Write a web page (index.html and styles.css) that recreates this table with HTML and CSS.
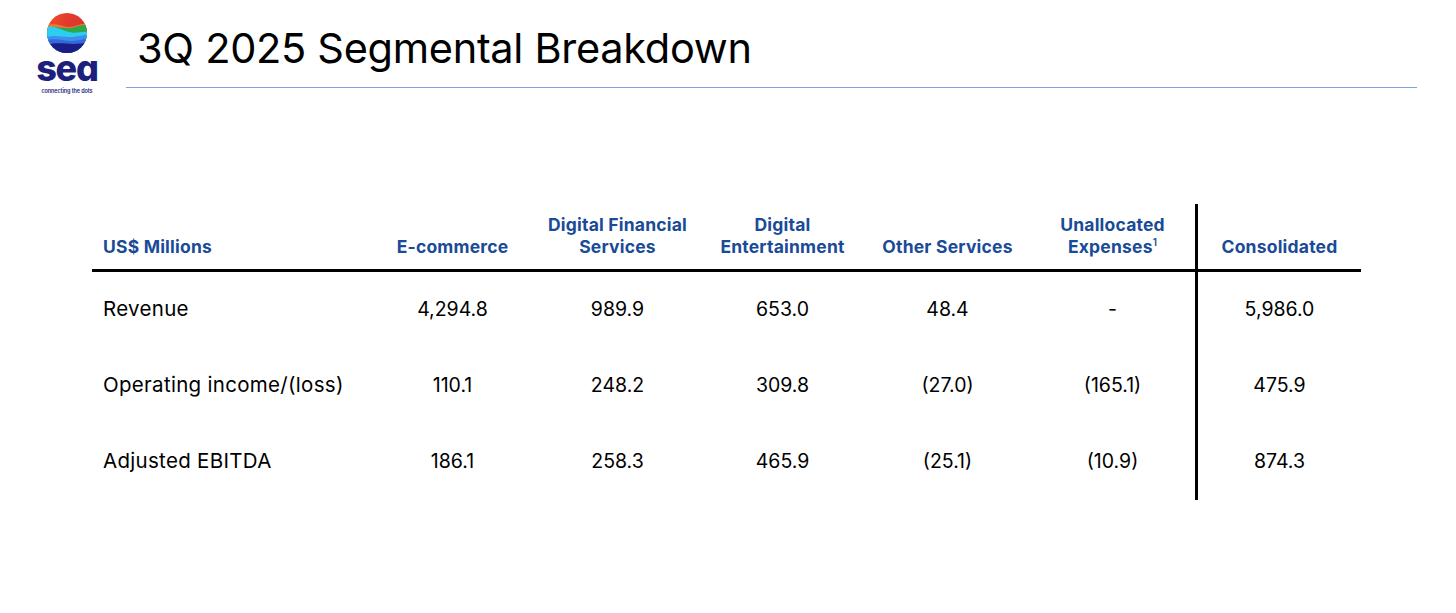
FILE: index.html
```html
<!DOCTYPE html>
<html lang="en">
<head>
<meta charset="utf-8">
<title>3Q 2025 Segmental Breakdown</title>
<link rel="stylesheet" href="styles.css">
</head>
<body>
<div class="slide">
  <header class="top">
    <div class="logo">
      <svg class="logo-mark" viewBox="0 0 40 40" width="40" height="40" aria-hidden="true">
        <defs>
          <clipPath id="c"><circle cx="20" cy="20" r="20"/></clipPath>
          <linearGradient id="rg" x1="0" y1="0" x2="1" y2="0.4">
            <stop offset="0" stop-color="#f0522a"/>
            <stop offset="0.5" stop-color="#e33a2c"/>
            <stop offset="1" stop-color="#d9342e"/>
          </linearGradient>
        </defs>
        <g clip-path="url(#c)">
          <rect x="0" y="0" width="40" height="40" fill="url(#rg)"/>
          <path d="M0 12 C8 10 14 13 20 14 C27 15 33 10 40 11 L40 40 L0 40 Z" fill="#f47a32"/>
          <path d="M0 15 C8 12 16 16 24 15 C30 14 35 11 40 12 L40 40 L0 40 Z" fill="#2ea84a"/>
          <path d="M0 14 C7 12 14 17 22 19 C29 21 34 18 40 19 L40 40 L0 40 Z" fill="#2ccdf0"/>
          <path d="M0 24 C8 22 14 24 22 24 C30 24 35 22 40 22 L40 40 L0 40 Z" fill="#3d8fea"/>
          <path d="M0 27 C8 25 16 28 24 28 C31 28 36 26 40 26 L40 40 L0 40 Z" fill="#3566dc"/>
          <path d="M0 32 C10 29 18 31 26 31 C32 31 36 30 40 30 L40 40 L0 40 Z" fill="#1b1d86"/>
        </g>
      </svg>
      <div class="logo-word">sea</div>
      <div class="logo-tag">connecting the dots</div>
    </div>
    <div class="title-wrap">
      <h1 class="title">3Q 2025 Segmental Breakdown</h1>
    </div>
  </header>

  <main class="content">
    <div class="table">
      <div class="cell head first"><span>US$ Millions</span></div>
      <div class="cell head"><span>E-commerce</span></div>
      <div class="cell head"><span>Digital Financial<br>Services</span></div>
      <div class="cell head"><span>Digital<br>Entertainment</span></div>
      <div class="cell head"><span>Other Services</span></div>
      <div class="cell head"><span>Unallocated<br>Expenses<sup>1</sup></span></div>
      <div class="cell head consol"><span>Consolidated</span></div>

      <div class="cell label">Revenue</div>
      <div class="cell num">4,294.8</div>
      <div class="cell num">989.9</div>
      <div class="cell num">653.0</div>
      <div class="cell num">48.4</div>
      <div class="cell num">-</div>
      <div class="cell num consol">5,986.0</div>

      <div class="cell label">Operating income/(loss)</div>
      <div class="cell num">110.1</div>
      <div class="cell num">248.2</div>
      <div class="cell num">309.8</div>
      <div class="cell num">(27.0)</div>
      <div class="cell num">(165.1)</div>
      <div class="cell num consol">475.9</div>

      <div class="cell label">Adjusted EBITDA</div>
      <div class="cell num">186.1</div>
      <div class="cell num">258.3</div>
      <div class="cell num">465.9</div>
      <div class="cell num">(25.1)</div>
      <div class="cell num">(10.9)</div>
      <div class="cell num consol">874.3</div>
    </div>
  </main>
</div>
</body>
</html>
```

FILE: styles.css
```css
* { box-sizing: border-box; }
html, body {
  margin: 0;
  padding: 0;
  background: #ffffff;
}
body {
  font-family: Inter, "Noto Sans", "Liberation Sans", sans-serif;
  color: #000;
}
.slide {
  width: 1456px;
  height: 613px;
  overflow: hidden;
}
.top {
  display: flex;
  align-items: flex-start;
  height: 97px;
  padding-top: 13px;
}
.logo {
  width: 126px;
  display: flex;
  flex-direction: column;
  align-items: center;
  padding-left: 8px;
}
.logo-mark {
  display: block;
}
.logo-word {
  font-family: Inter, sans-serif;
  font-feature-settings: "cv11" 1;
  font-weight: 800;
  font-size: 36px;
  line-height: 36px;
  letter-spacing: -1.2px;
  color: #1c1f7c;
  margin-top: -3px;
}
.logo-tag {
  font-family: Inter, sans-serif;
  font-weight: 600;
  font-size: 5.5px;
  line-height: 7px;
  letter-spacing: -0.1px;
  color: #1c1f7c;
  margin-top: 2px;
}
.title-wrap {
  flex: 1;
  margin-right: 39px;
  border-bottom: 1px solid #7fa3dc;
  height: 75px;
}
.title {
  margin: 0;
  padding-left: 11px;
  padding-top: 11px;
  font-weight: 400;
  font-size: 41.5px;
  line-height: 48px;
  letter-spacing: -0.3px;
  color: #000;
}
.content {
  padding-left: 92px;
  padding-top: 107px;
}
.table {
  display: grid;
  grid-template-columns: 278px repeat(5, 165px) 166px;
  grid-template-rows: 65px 3px repeat(3, 76px);
  width: 1269px;
}
.cell {
  display: flex;
  align-items: center;
  justify-content: center;
  text-align: center;
}
.head {
  align-items: flex-end;
  padding-bottom: 11px;
  font-weight: 700;
  font-size: 17.5px;
  line-height: 22px;
  letter-spacing: 0.2px;
  color: #1a4b97;
  border-bottom: 3px solid #000;
  grid-row: 1 / 3;
}
.head sup {
  font-size: 10px;
  line-height: 0;
  vertical-align: 7px;
  font-weight: 600;
}
.head.first {
  justify-content: flex-start;
  padding-left: 11px;
}
.consol {
  border-left: 3px solid #000;
}
.label {
  justify-content: flex-start;
  padding-left: 11px;
  padding-bottom: 3px;
  font-size: 20.5px;
  letter-spacing: 0.3px;
}
.num {
  padding-bottom: 3px;
  font-size: 19.5px;
}
```
